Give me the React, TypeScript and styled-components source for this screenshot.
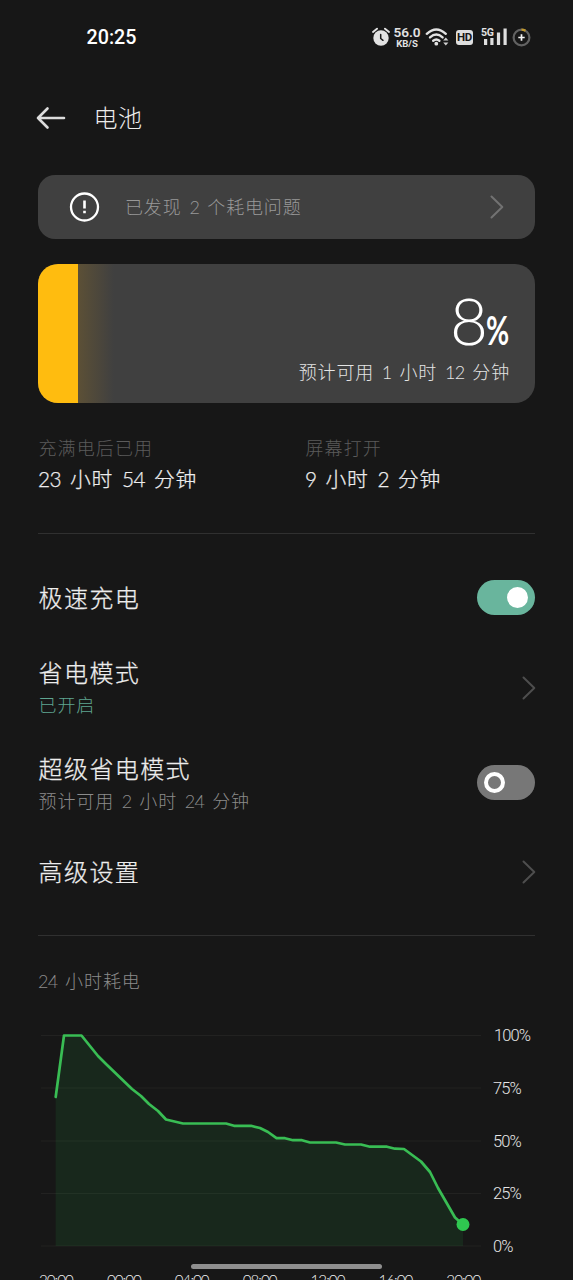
import React from 'react';
import styled, { createGlobalStyle } from 'styled-components';

const GlobalStyle = createGlobalStyle`
  html, body { margin: 0; padding: 0; background: #171717; }
  body { overflow: hidden; }
  * { box-sizing: border-box; }
`;

const Screen = styled.main`
  width: 573px;
  height: 1280px;
  position: relative;
  overflow: hidden;
  display: flex;
  flex-direction: column;
  background: #171717;
  color: #ececec;
  font-family: Lato, 'Noto Sans CJK SC', sans-serif;
  font-weight: 300;
`;

const StatusBar = styled.div`
  flex: none;
  height: 74px;
  padding: 0 42px 0 86.5px;
  display: flex;
  align-items: center;
  justify-content: space-between;
`;

const Clock = styled.div`
  padding-top: 2px;
  font: 500 19.7px/24px Roboto, sans-serif;
  color: #fff;
`;

const StatusIcons = styled.div`
  display: flex;
  align-items: center;
  svg { display: block; }
`;

const Speed = styled.div`
  width: 28px;
  margin: 0 4px 0 3px;
  display: flex;
  flex-direction: column;
  align-items: center;
  font-family: Roboto, sans-serif;
  color: #e2e2e2;
  white-space: nowrap;
  b { font-size: 13.6px; line-height: 12px; font-weight: 600; }
  span { font-size: 9.6px; line-height: 11px; font-weight: 700; }
`;

const Header = styled.header`
  flex: none;
  height: 88px;
  padding-left: 36px;
  display: flex;
  align-items: center;
  gap: 27.5px;
`;

const PageTitle = styled.h1`
  margin: 0;
  font-size: 24px;
  line-height: 34px;
  font-weight: 300;
  letter-spacing: 0.6px;
`;

const Content = styled.div`
  flex: none;
  padding: 13px 38px 0;
  display: flex;
  flex-direction: column;
`;

const Num = styled.span`
  letter-spacing: -0.6px;
`;

const Alert = styled.section`
  height: 64px;
  border-radius: 17px;
  background: #404040;
  padding: 0 31px 0 31px;
  display: flex;
  align-items: center;
`;

const AlertText = styled.span`
  flex: 1;
  margin-left: 25px;
  font-size: 18px;
  line-height: 28px;
  letter-spacing: 0.85px;
  word-spacing: 2.2px;
  color: #989898;
`;

const Battery = styled.section`
  height: 139px;
  margin-top: 25px;
  border-radius: 20px;
  overflow: hidden;
  display: flex;
  background: #404040;
`;

const Charge = styled.div`
  width: 40px;
  background: #ffbc0f;
`;

const Glow = styled.div`
  width: 36px;
  background: linear-gradient(90deg, #5c5036, #404040);
`;

const BatteryInfo = styled.div`
  flex: 1;
  padding: 24px 25px 0 0;
  display: flex;
  flex-direction: column;
  align-items: flex-end;
`;

const Level = styled.div`
  display: flex;
  align-items: baseline;
  height: 70px;
  line-height: 64px;
  font-size: 65.5px;
  color: #fff;
`;

const Unit = styled.span`
  width: 24px;
  margin-left: -2px;
  font-size: 41px;
  font-weight: 700;
  transform: scaleX(0.69);
  transform-origin: left;
`;

const Remaining = styled.div`
  font-size: 18px;
  line-height: 28px;
  letter-spacing: 0.85px;
  word-spacing: 2px;
  color: #e4e4e4;
`;

const Stats = styled.section`
  height: 130px;
  padding-top: 31px;
  display: grid;
  grid-template-columns: 267px 1fr;
`;

const StatLabel = styled.div`
  padding-left: 0.5px;
  font-size: 18px;
  line-height: 28px;
  letter-spacing: 1.1px;
  color: #5b5b5b;
`;

const StatValue = styled.div`
  font-size: 20.8px;
  line-height: 34px;
  letter-spacing: 0.8px;
  word-spacing: 2.5px;
  -webkit-text-stroke: 0.25px currentColor;
  color: #ededed;
`;

const Divider = styled.hr`
  width: 100%;
  height: 1px;
  margin: 0;
  border: 0;
  background: #303030;
`;

const Settings = styled.section`
  height: 401px;
  padding-top: 16px;
`;

const Row = styled.div<{ $h: number }>`
  height: ${(p) => p.$h}px;
  padding-left: 0.6px;
  display: flex;
  align-items: center;
  justify-content: space-between;
  > svg { margin: 0 -1px 1px 0; }
`;

const RowTitle = styled.div`
  font-size: 24px;
  line-height: 34px;
  letter-spacing: 1.4px;
  -webkit-text-stroke: 0.25px currentColor;
  color: #ededed;
`;

const RowNote = styled.div<{ $active?: boolean }>`
  font-size: 18px;
  line-height: 30px;
  letter-spacing: 0.85px;
  word-spacing: 2px;
  color: ${(p) => (p.$active ? '#5fa590' : '#8b8b8b')};
`;

const Switch = styled.div<{ $on?: boolean }>`
  width: 58px;
  height: 35px;
  margin-bottom: ${(p) => (p.$on ? 0 : 3)}px;
  border-radius: 18px;
  padding: 0 7px;
  display: flex;
  align-items: center;
  justify-content: ${(p) => (p.$on ? 'flex-end' : 'flex-start')};
  background: ${(p) => (p.$on ? '#69b59d' : '#777')};
`;

const Knob = styled.i<{ $on?: boolean }>`
  width: 21px;
  height: 21px;
  border-radius: 50%;
  border: 4.5px solid #fff;
  background: ${(p) => (p.$on ? '#fff' : 'transparent')};
`;

const ChartTitle = styled.h2`
  margin: 30px 0 0;
  font-size: 18px;
  line-height: 30px;
  font-weight: 300;
  letter-spacing: 0.95px;
  word-spacing: 1.5px;
  color: #8b8b8b;
`;

const ChartBody = styled.div`
  display: flex;
  margin-top: 29px;
  svg { display: block; flex: none; }
`;

const Scale = styled.div`
  margin: 0 0 -1px 12px;
  padding-top: 1px;
  height: 232px;
  display: flex;
  flex-direction: column;
  justify-content: space-between;
  font-family: Roboto, sans-serif;
  font-size: 16.5px;
  line-height: 20px;
  letter-spacing: -0.9px;
  color: #e6e6e6;
  span:first-child { padding-left: 1px; }
`;

const Hours = styled.div`
  margin: 14px 0 0 -16px;
  display: grid;
  grid-template-columns: repeat(7, 67.9px);
  text-align: center;
  font-size: 15.2px;
  line-height: 20px;
  letter-spacing: -1px;
  color: #f2f2f2;
`;

const HomeIndicator = styled.div`
  position: absolute;
  left: 191px;
  top: 1264px;
  width: 191px;
  height: 5px;
  border-radius: 3px;
  background: #8f8f8f;
`;

const Chevron = ({ color = '#4e4e4e' }: { color?: string }) => (
  <svg width="14" height="24" viewBox="0 0 14 24" fill="none" stroke={color} strokeWidth="2">
    <path d="M1.5 1.5 12.3 12 1.5 22.5" strokeLinecap="round" strokeLinejoin="round" />
  </svg>
);

const AlarmIcon = () => (
  <svg width="18" height="20" viewBox="0 0 18 20">
    <circle cx="9" cy="11" r="7.7" fill="#e2e2e2" />
    <path d="M1 5 5 1.7M17 5 13 1.7" stroke="#e2e2e2" strokeWidth="1.9" strokeLinecap="round" />
    <path d="M8.7 7.5v4l2.3 1.8" stroke="#171717" strokeWidth="1.5" fill="none" strokeLinecap="round" />
  </svg>
);

const WifiIcon = () => (
  <svg width="24" height="20" viewBox="0 0 24 20">
    <g fill="none" stroke="#e2e2e2" strokeWidth="2.4" strokeLinecap="round">
      <path d="M1.8 6.8Q11.3 -2 20.8 6.8" />
      <path d="M5 10.4Q11.3 4.7 17.6 10.4" />
      <path d="M8.2 13.8Q11.3 11.3 14.4 13.8" />
    </g>
    <circle cx="11.3" cy="16.7" r="1.9" fill="#e2e2e2" />
    <path d="M20.8 10.6 23.4 13.6H18.2ZM20.8 18.4 18.2 15.4H23.4Z" fill="#d0d0d0" />
  </svg>
);

const HdBadge = styled.span`
  width: 17px;
  height: 15px;
  margin: 0 8px 0 7px;
  border-radius: 3px;
  background: #dedede;
  color: #171717;
  display: flex;
  align-items: center;
  justify-content: center;
  font: 700 11.5px/15px Roboto, sans-serif;
  letter-spacing: -0.3px;
`;

const Signal = styled.div`
  position: relative;
  width: 26px;
  height: 20px;
  margin-right: 5px;
  span {
    position: absolute;
    left: 0;
    top: -0.5px;
    font: 700 10.5px/11px Roboto, sans-serif;
    letter-spacing: -0.3px;
    color: #e2e2e2;
  }
`;

const ChargeIcon = () => (
  <svg width="19" height="19" viewBox="0 0 19 19" fill="none">
    <circle cx="9.5" cy="9.5" r="7.9" stroke="#626262" strokeWidth="2.2" />
    <path d="M9.5 1.6A7.9 7.9 0 0 1 13.5 2.7" stroke="#c39a2e" strokeWidth="2.2" />
    <path d="M9.5 6.3v6.4M6.3 9.5h6.4" stroke="#f4f4f4" strokeWidth="1.7" />
  </svg>
);

const grid = [0.5, 53, 106, 158.5, 211];
const history =
  '17.7,62 26,0.5 43.5,0.5 60,21 68,29 94,54 103,61 111,69 120,76 128,84.5 145,88.5 188,88.5 196,90.8 213,90.8 222,93 230,97 238.5,103.2 247,103.2 255,105.2 264,105.2 272,107.5 298,107.5 307,109.5 323,109.5 332,111.7 349,111.7 357,113.7 366,114 383,126.5 392,137 400,153 417,182.5 425,189.5';

const HistoryChart = () => (
  <svg width="443" height="221" viewBox="0 -10 443 221" overflow="visible">
    {grid.map((y) => (
      <line key={y} x1="3" x2="443" y1={y} y2={y} stroke="#222221" />
    ))}
    <polygon points={`${history} 425,211 17.7,211`} fill="#2ac450" fillOpacity="0.1" />
    <polyline points={history} fill="none" stroke="#39bd54" strokeWidth="2.7" strokeLinejoin="round" strokeLinecap="round" />
    <circle cx="425" cy="189.5" r="6.5" fill="#2fc850" />
  </svg>
);

export default function App() {
  return (
    <Screen>
      <GlobalStyle />
      <StatusBar>
        <Clock>20:25</Clock>
        <StatusIcons>
          <AlarmIcon />
          <Speed><b>56.0</b><span>KB/S</span></Speed>
          <WifiIcon />
          <HdBadge>HD</HdBadge>
          <Signal>
            <svg width="26" height="20" viewBox="0 0 26 20" fill="#dedede">
              <path d="M3 12h3.2v6H3zM9.3 11h3.2v7H9.3zM15.9 5.5h3.2V18h-3.2zM22.5 1.5h3.2V18h-3.2z" />
            </svg>
            <span>5G</span>
          </Signal>
          <ChargeIcon />
        </StatusIcons>
      </StatusBar>

      <Header>
        <svg width="30" height="24" viewBox="0 0 30 24" fill="none" stroke="#dcdcdc" strokeWidth="2.6">
          <path d="M28 12H2M11.5 2.5 2 12l9.5 9.5" strokeLinecap="round" strokeLinejoin="round" />
        </svg>
        <PageTitle>电池</PageTitle>
      </Header>

      <Content>
        <Alert>
          <svg width="31" height="31" viewBox="0 0 31 31" fill="none" stroke="#fff">
            <circle cx="15.5" cy="15" r="13.5" strokeWidth="2.3" />
            <path d="M15.5 8.5v8M15.5 18.7v2.6" strokeWidth="2.6" />
          </svg>
          <AlertText>已发现 <Num>2</Num> 个耗电问题</AlertText>
          <Chevron color="#727272" />
        </Alert>

        <Battery>
          <Charge />
          <Glow />
          <BatteryInfo>
            <Level>8<Unit>%</Unit></Level>
            <Remaining>预计可用 <Num>1</Num> 小时 <Num>12</Num> 分钟</Remaining>
          </BatteryInfo>
        </Battery>

        <Stats>
          <div>
            <StatLabel>充满电后已用</StatLabel>
            <StatValue><Num>23</Num> 小时 <Num>54</Num> 分钟</StatValue>
          </div>
          <div>
            <StatLabel>屏幕打开</StatLabel>
            <StatValue><Num>9</Num> 小时 <Num>2</Num> 分钟</StatValue>
          </div>
        </Stats>
        <Divider />

        <Settings>
          <Row $h={95}>
            <RowTitle>极速充电</RowTitle>
            <Switch $on><Knob $on /></Switch>
          </Row>
          <Row $h={86}>
            <div>
              <RowTitle>省电模式</RowTitle>
              <RowNote $active>已开启</RowNote>
            </div>
            <Chevron />
          </Row>
          <Row $h={106}>
            <div>
              <RowTitle>超级省电模式</RowTitle>
              <RowNote>预计可用 <Num>2</Num> 小时 <Num>24</Num> 分钟</RowNote>
            </div>
            <Switch><Knob /></Switch>
          </Row>
          <Row $h={70}>
            <RowTitle>高级设置</RowTitle>
            <Chevron />
          </Row>
        </Settings>
        <Divider />

        <ChartTitle><Num>24</Num> 小时耗电</ChartTitle>
        <ChartBody>
          <HistoryChart />
          <Scale>
            <span>100%</span>
            <span>75%</span>
            <span>50%</span>
            <span>25%</span>
            <span>0%</span>
          </Scale>
        </ChartBody>
        <Hours>
          <span>20:00</span>
          <span>00:00</span>
          <span>04:00</span>
          <span>08:00</span>
          <span>12:00</span>
          <span>16:00</span>
          <span>20:00</span>
        </Hours>
      </Content>
      <HomeIndicator />
    </Screen>
  );
}
